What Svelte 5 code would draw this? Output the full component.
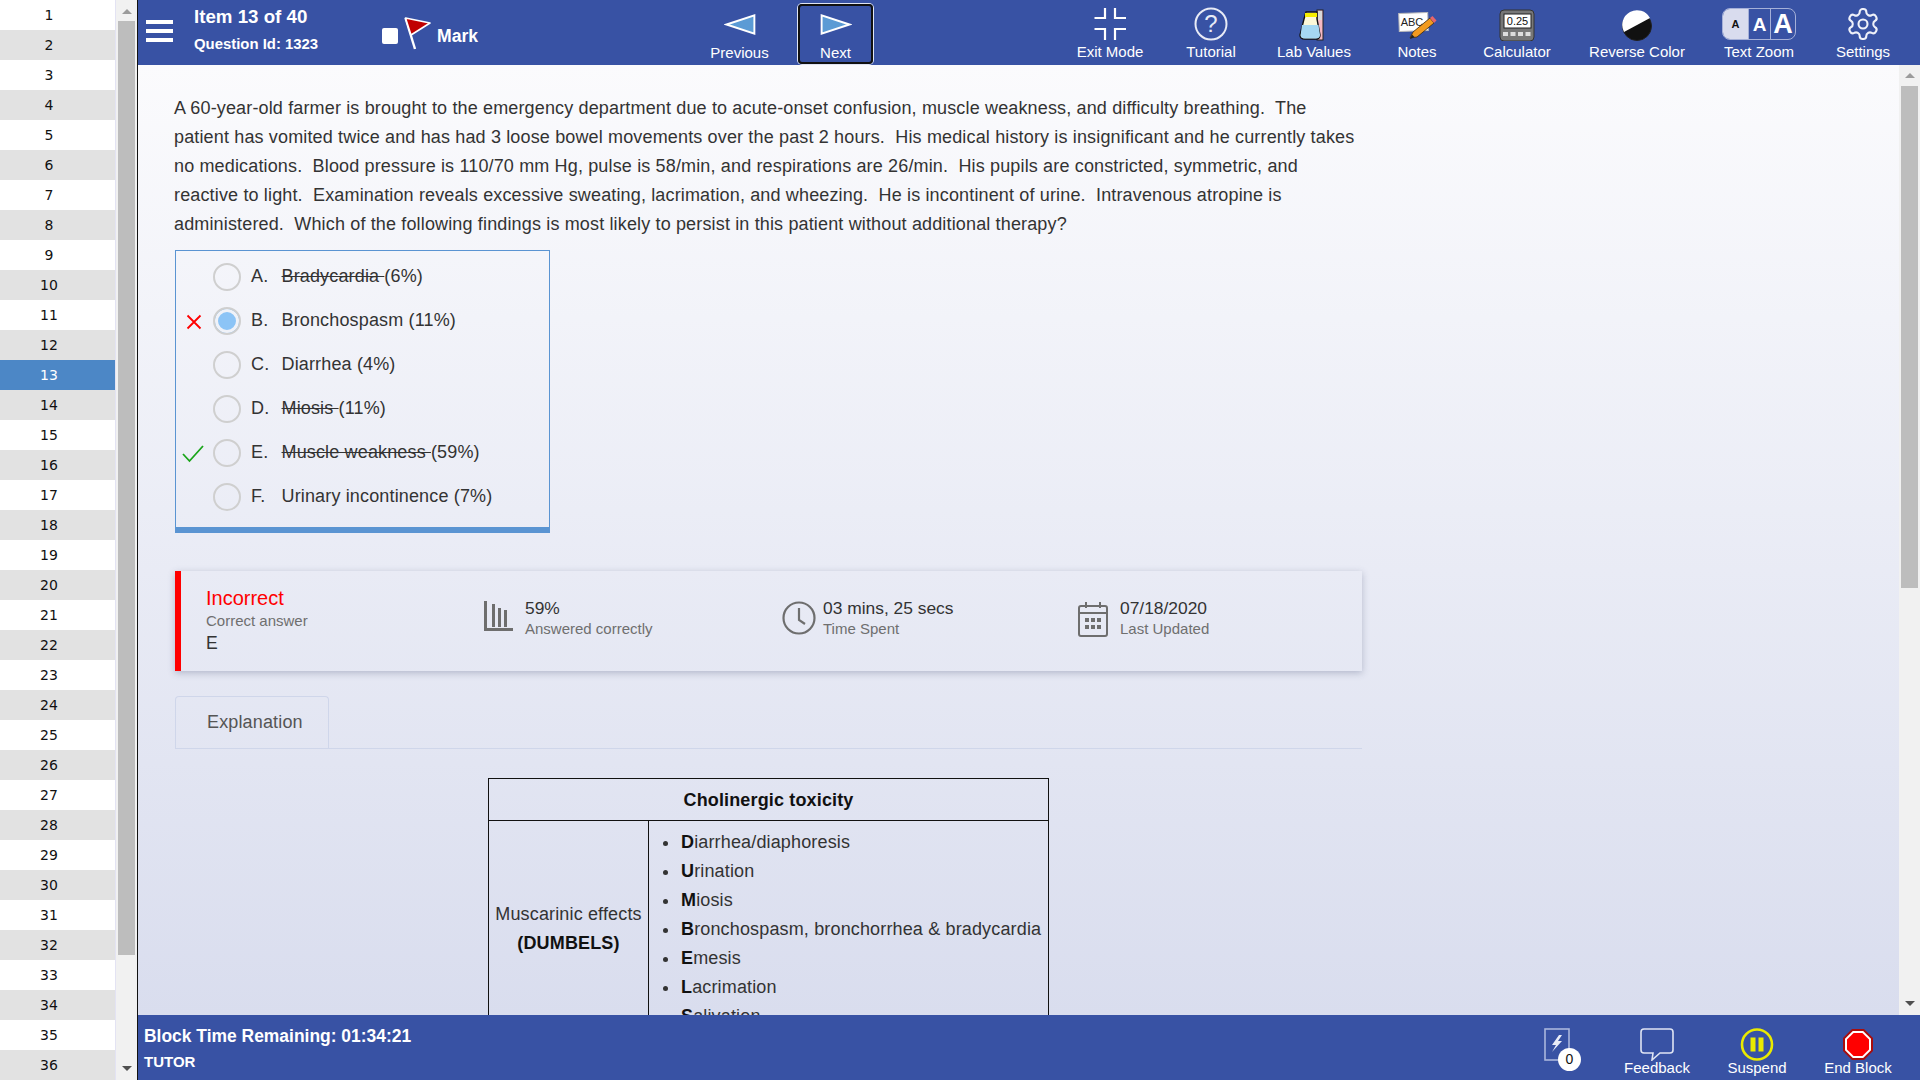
<script lang="ts">
  const ITEMS = Array.from({ length: 36 }, (_, i) => i + 1);
  const CURRENT = 13;

  const OPTIONS = [
    { key: 'A', label: 'Bradycardia', pct: 6, struck: true },
    { key: 'B', label: 'Bronchospasm', pct: 11, selected: true, mark: 'wrong' },
    { key: 'C', label: 'Diarrhea', pct: 4 },
    { key: 'D', label: 'Miosis', pct: 11, struck: true },
    { key: 'E', label: 'Muscle weakness', pct: 59, struck: true, mark: 'right' },
    { key: 'F', label: 'Urinary incontinence', pct: 7 }
  ];

  const DUMBELS = [
    ['D', 'iarrhea/diaphoresis'],
    ['U', 'rination'],
    ['M', 'iosis'],
    ['B', 'ronchospasm, bronchorrhea & bradycardia'],
    ['E', 'mesis'],
    ['L', 'acrimation'],
    ['S', 'alivation']
  ];
</script>

<div class="app">
  <aside class="sidebar">
    <ul class="items">
      {#each ITEMS as n}
        <li class:current={n === CURRENT}><span>{n}</span></li>
      {/each}
    </ul>
    <div class="scrollbar left">
      <span class="arrow up"></span>
      <span class="thumb"></span>
      <span class="arrow down"></span>
    </div>
  </aside>

  <main class="main">
    <header class="topbar">
      <div class="topleft">
        <div class="burger"><i></i><i></i><i></i></div>
        <div class="title">
          <div class="item-no">Item 13 of 40</div>
          <div class="question-id">Question Id: 1323</div>
        </div>
        <div class="mark">
          <span class="checkbox"></span>
          <svg width="27" height="33" viewBox="0 0 27 33">
            <path d="M1.5 1 L11 32" stroke="#fff" stroke-width="2.4" fill="none" />
            <path d="M1.5 1 L26 6 L7 18 Z" fill="#c00000" stroke="#fff" stroke-width="1.6" stroke-linejoin="round" />
          </svg>
          <span class="mark-label">Mark</span>
        </div>
      </div>

      <nav class="nav">
        <div class="nav-btn">
          <svg width="32" height="24" viewBox="0 0 32 24"><polygon points="2,12 31,2.5 31,21.5" fill="#5b9bd5" stroke="#fff" stroke-width="2" /></svg>
          <span>Previous</span>
        </div>
        <div class="nav-btn focused">
          <svg width="32" height="24" viewBox="0 0 32 24"><polygon points="30,12 1,2.5 1,21.5" fill="#5b9bd5" stroke="#fff" stroke-width="2" /></svg>
          <span>Next</span>
        </div>
      </nav>

      <div class="tools">
        <div class="tool">
          <svg width="34" height="34" viewBox="0 0 34 34" fill="none" stroke="#fff" stroke-width="2.2">
            <path d="M1.5 11 H12 V1 M22 1 V11 H33 M1.5 22 H12 V33 M22 33 V22 H33" />
          </svg>
          <span>Exit Mode</span>
        </div>
        <div class="tool">
          <svg width="34" height="34" viewBox="0 0 34 34" fill="none">
            <circle cx="17" cy="17" r="15.5" stroke="#e8ebf6" stroke-width="2" />
            <text x="17" y="25" text-anchor="middle" class="q-glyph">?</text>
          </svg>
          <span>Tutorial</span>
        </div>
        <div class="tool">
          <svg width="34" height="34" viewBox="0 0 34 34">
            <rect x="20" y="3" width="6" height="30" fill="#f5b8c4" stroke="#222" stroke-width="1" />
            <rect x="21" y="4" width="4" height="9" fill="#d9d9d9" />
            <path d="M9 5 H20 V12 L23 28 Q23 32 19 32 H8 Q3 32 3 28 L7 12 Z" fill="#fdf8d8" stroke="#111" stroke-width="1.4" />
            <rect x="8" y="6" width="12" height="4" fill="#f7ee00" />
            <path d="M5 18 H21.5 L23 28 Q23 31.4 19 31.4 H8 Q3.6 31.4 3.6 28 Z" fill="#a6d8f2" />
          </svg>
          <span>Lab Values</span>
        </div>
        <div class="tool">
          <svg width="40" height="34" viewBox="0 0 40 34">
            <rect x="2" y="6" width="29" height="18" fill="#fff" stroke="#bbb" stroke-width="1" transform="rotate(-2 16 15)" />
            <text x="15" y="19" text-anchor="middle" class="abc">ABC</text>
            <path d="M13 31 L16 25 L33 11 L37 16 L20 30 Z" fill="#f29a1f" stroke="#3a2a10" stroke-width=".8" />
            <path d="M33 11 L35.5 9 L39.5 13.5 L37 16 Z" fill="#e8656b" />
            <path d="M13 32 L15 27.5 L17.5 30 Z" fill="#222" />
          </svg>
          <span>Notes</span>
        </div>
        <div class="tool">
          <svg width="36" height="34" viewBox="0 0 36 34">
            <rect x="1" y="3" width="34" height="31" rx="4" fill="#777" stroke="#333" stroke-width="1" />
            <rect x="5" y="7" width="27" height="14" fill="#fff" stroke="#222" stroke-width="1" />
            <text x="18.5" y="18" text-anchor="middle" class="calc">0.25</text>
            <rect x="4" y="25" width="5" height="4" fill="#ddd" />
            <rect x="11.5" y="25" width="5" height="4" fill="#ddd" />
            <rect x="19" y="25" width="5" height="4" fill="#ddd" />
            <rect x="26.5" y="25" width="5" height="4" fill="#ddd" />
          </svg>
          <span>Calculator</span>
        </div>
        <div class="tool">
          <svg width="32" height="34" viewBox="0 0 32 34">
            <circle cx="16" cy="19" r="14.5" fill="#111" stroke="#222" stroke-width="1" />
            <path d="M3 25 A14 14 0 0 1 29 11 Z" fill="#fff" />
          </svg>
          <span>Reverse Color</span>
        </div>
        <div class="tool">
          <div class="zoom-box">
            <span class="z small">A</span>
            <span class="z mid">A</span>
            <span class="z big">A</span>
          </div>
          <span>Text Zoom</span>
        </div>
        <div class="tool">
          <svg width="36" height="36" viewBox="0 0 24 24" fill="none" stroke="#eef0f9" stroke-width="1.4" stroke-linejoin="round" class="gear">
            <path d="M12.22 2h-.44a2 2 0 0 0-2 2v.18a2 2 0 0 1-1 1.73l-.43.25a2 2 0 0 1-2 0l-.15-.08a2 2 0 0 0-2.73.73l-.22.38a2 2 0 0 0 .73 2.73l.15.1a2 2 0 0 1 1 1.72v.51a2 2 0 0 1-1 1.74l-.15.09a2 2 0 0 0-.73 2.73l.22.38a2 2 0 0 0 2.73.73l.15-.08a2 2 0 0 1 2 0l.43.25a2 2 0 0 1 1 1.73V20a2 2 0 0 0 2 2h.44a2 2 0 0 0 2-2v-.18a2 2 0 0 1 1-1.73l.43-.25a2 2 0 0 1 2 0l.15.08a2 2 0 0 0 2.73-.73l.22-.39a2 2 0 0 0-.73-2.73l-.15-.08a2 2 0 0 1-1-1.74v-.5a2 2 0 0 1 1-1.74l.15-.09a2 2 0 0 0 .73-2.73l-.22-.38a2 2 0 0 0-2.73-.73l-.15.08a2 2 0 0 1-2 0l-.43-.25a2 2 0 0 1-1-1.73V4a2 2 0 0 0-2-2z" />
            <circle cx="12" cy="12" r="3" />
          </svg>
          <span>Settings</span>
        </div>
      </div>
    </header>

    <div class="body">
      <div class="content">
        <p class="stem">
          A 60-year-old farmer is brought to the emergency department due to acute-onset confusion, muscle weakness, and difficulty breathing.&nbsp; The patient has vomited twice and has had 3 loose bowel movements over the past 2 hours.&nbsp; His medical history is insignificant and he currently takes no medications.&nbsp; Blood pressure is 110/70 mm Hg, pulse is 58/min, and respirations are 26/min.&nbsp; His pupils are constricted, symmetric, and reactive to light.&nbsp; Examination reveals excessive sweating, lacrimation, and wheezing.&nbsp; He is incontinent of urine.&nbsp; Intravenous atropine is administered.&nbsp; Which of the following findings is most likely to persist in this patient without additional therapy?
        </p>

        <div class="answers">
          {#each OPTIONS as opt}
            <div class="answer">
              <span class="verdict">
                {#if opt.mark === 'wrong'}
                  <svg class="cross" width="16" height="16" viewBox="0 0 16 16"><path d="M1.5 1.5 L14.5 14.5 M14.5 1.5 L1.5 14.5" stroke="#f00" stroke-width="1.8" fill="none" /></svg>
                {:else if opt.mark === 'right'}
                  <svg class="tick" width="22" height="18" viewBox="0 0 22 18"><path d="M1 9 L7.5 16 L21 1" stroke="#1aa51a" stroke-width="1.8" fill="none" /></svg>
                {/if}
              </span>
              <span class="radio" class:selected={opt.selected}></span>
              <span class="letter">{opt.key}.</span>
              <span class="answer-text"><span class:struck={opt.struck}>{opt.label}&nbsp;</span>({opt.pct}%)</span>
            </div>
          {/each}
        </div>

        <section class="stats">
          <div class="result">
            <div class="incorrect">Incorrect</div>
            <div class="sub">Correct answer</div>
            <div class="correct-key">E</div>
          </div>
          <div class="stat">
            <svg class="bars" width="29" height="30" viewBox="0 0 29 30" fill="#6e6e6e">
              <rect x="0" y="0" width="3" height="30" />
              <rect x="0" y="27" width="29" height="3" />
              <rect x="8" y="3" width="3" height="23" />
              <rect x="14" y="7" width="3" height="19" />
              <rect x="20" y="9" width="3" height="17" />
            </svg>
            <div>
              <div class="value">59%</div>
              <div class="sub">Answered correctly</div>
            </div>
          </div>
          <div class="stat">
            <svg class="clock" width="34" height="34" viewBox="0 0 34 34" fill="none" stroke="#6e6e6e" stroke-width="2.2">
              <circle cx="17" cy="17" r="15.5" />
              <path d="M17 7 V19 L23 23" />
            </svg>
            <div>
              <div class="value">03 mins, 25 secs</div>
              <div class="sub">Time Spent</div>
            </div>
          </div>
          <div class="stat">
            <svg class="calendar" width="30" height="36" viewBox="0 0 30 36">
              <rect x="1" y="5" width="28" height="30" rx="2" fill="none" stroke="#6e6e6e" stroke-width="2" />
              <path d="M1 12 H29" stroke="#6e6e6e" stroke-width="2" />
              <path d="M8 1 V7 M22 1 V7" stroke="#6e6e6e" stroke-width="2" />
              <g fill="#6e6e6e">
                <rect x="7" y="17" width="4" height="4" /><rect x="13" y="17" width="4" height="4" /><rect x="19" y="17" width="4" height="4" />
                <rect x="7" y="24" width="4" height="4" /><rect x="13" y="24" width="4" height="4" /><rect x="19" y="24" width="4" height="4" />
              </g>
            </svg>
            <div>
              <div class="value">07/18/2020</div>
              <div class="sub">Last Updated</div>
            </div>
          </div>
        </section>

        <div class="tabs"><div class="tab">Explanation</div></div>

        <table class="explain">
          <thead>
            <tr><th colspan="2">Cholinergic toxicity</th></tr>
          </thead>
          <tbody>
            <tr>
              <td class="effect">Muscarinic effects<br /><strong>(DUMBELS)</strong></td>
              <td class="effect-list">
                <ul>
                  {#each DUMBELS as [first, rest]}
                    <li><strong>{first}</strong>{rest}</li>
                  {/each}
                </ul>
              </td>
            </tr>
          </tbody>
        </table>
      </div>
      <div class="scrollbar right">
        <span class="arrow up"></span>
        <span class="thumb"></span>
        <span class="arrow down"></span>
      </div>
    </div>

    <footer class="bottombar">
      <div class="timer">
        <div class="time-left">Block Time Remaining: 01:34:21</div>
        <div class="mode">TUTOR</div>
      </div>
      <div class="foot-tools">
        <div class="foot-tool flash">
          <svg width="26" height="33" viewBox="0 0 26 33">
            <rect x="1" y="1" width="24" height="31" fill="none" stroke="#a9b6dc" stroke-width="1.6" />
            <path d="M15 7 L8 17 H12 L8 24 L18 13 H14 L18 7 Z" fill="#e9ecf7" />
          </svg>
          <span class="badge">0</span>
        </div>
        <div class="foot-tool">
          <svg width="34" height="33" viewBox="0 0 34 33">
            <path d="M4 1 H30 Q33 1 33 4 V22 Q33 25 30 25 H20 L12 32 L13 25 H4 Q1 25 1 22 V4 Q1 1 4 1 Z" fill="none" stroke="#dfe4f3" stroke-width="1.6" />
          </svg>
          <span>Feedback</span>
        </div>
        <div class="foot-tool">
          <svg width="34" height="33" viewBox="0 0 34 33">
            <circle cx="17" cy="16.5" r="15" fill="none" stroke="#eaea00" stroke-width="2.6" />
            <rect x="10.5" y="9.5" width="5" height="14" fill="#eaea00" />
            <rect x="18.5" y="9.5" width="5" height="14" fill="#eaea00" />
          </svg>
          <span>Suspend</span>
        </div>
        <div class="foot-tool">
          <svg width="32" height="33" viewBox="0 0 32 33">
            <polygon points="10,1 22,1 31,10 31,23 22,32 10,32 1,23 1,10" fill="#a80c0c" />
            <polygon points="10.8,3 21.2,3 29,10.8 29,22.2 21.2,30 10.8,30 3,22.2 3,10.8" fill="#fff" />
            <polygon points="11.6,5 20.4,5 27,11.6 27,21.4 20.4,28 11.6,28 5,21.4 5,11.6" fill="#f00" />
          </svg>
          <span>End Block</span>
        </div>
      </div>
    </footer>
  </main>
</div>

<style>
  :global(body) {
    margin: 0;
    overflow: hidden;
    font-family: "Liberation Sans", Arial, sans-serif;
  }

  .app {
    display: flex;
    width: 1920px;
    height: 1080px;
    overflow: hidden;
    color: #333;
  }

  /* Left item list */
  .sidebar {
    display: flex;
    flex: 0 0 138px;
    border-right: 1px solid #111;
    box-sizing: border-box;
    background: #fff;
  }

  .items {
    flex: 0 0 115px;
    margin: 0;
    padding: 0;
    list-style: none;
    font-family: "DejaVu Sans", sans-serif;
    font-size: 14px;
    color: #111;
  }

  .items li {
    height: 30px;
    line-height: 31px;
    padding-right: 17px;
    text-align: center;
  }

  .items li:nth-child(even) {
    background: #e2e2e2;
  }

  .items li.current {
    background: #4c87c6;
    color: #fff;
  }

  .scrollbar {
    display: flex;
    flex-direction: column;
    align-items: center;
    background: #f1f1f1;
  }

  .scrollbar.left {
    flex: 1;
    border-left: 1px solid #e3e3f3;
  }

  .scrollbar.right {
    flex: 0 0 21px;
  }

  .thumb {
    width: 17px;
    background: #bdbdbd;
  }

  .scrollbar.left .thumb {
    height: 934px;
  }

  .scrollbar.right .thumb {
    height: 502px;
  }

  .arrow {
    width: 0;
    height: 0;
    border-left: 5px solid transparent;
    border-right: 5px solid transparent;
  }

  .arrow.up {
    border-bottom: 5px solid #9b9b9b;
    margin: 9px 0 7px;
  }

  .arrow.down {
    margin-top: auto;
    margin-bottom: 9px;
    border-top: 5px solid #505050;
  }

  .scrollbar.right .arrow.up {
    margin: 8px 0 8px;
  }

  /* Main column */
  .main {
    display: flex;
    flex: 1;
    flex-direction: column;
    min-width: 0;
  }

  .topbar {
    display: flex;
    flex: 0 0 65px;
    background: #3852a4;
    color: #fff;
  }

  .topleft {
    display: flex;
    flex: 0 0 563px;
    padding-left: 8px;
    box-sizing: border-box;
  }

  .burger {
    display: flex;
    flex-direction: column;
    justify-content: space-between;
    width: 27px;
    height: 22px;
    margin-top: 20px;
  }

  .burger i {
    height: 4px;
    background: #fff;
  }

  .title {
    flex: 0 0 188px;
    margin-left: 21px;
    font-weight: bold;
  }

  .item-no {
    font-size: 18.72px;
    line-height: 22px;
    margin-top: 6px;
  }

  .question-id {
    font-size: 14.9px;
    line-height: 18px;
    margin-top: 7px;
  }

  .mark {
    display: flex;
    align-items: center;
    height: 65px;
  }

  .checkbox {
    width: 16px;
    height: 16px;
    margin-top: 6px;
    background: #fff;
    border-radius: 2px;
  }

  .mark svg {
    margin: 2px 0 0 6px;
  }

  .mark-label {
    margin: 8px 0 0 6px;
    font-size: 17.6px;
    font-weight: bold;
  }

  .nav {
    display: flex;
    gap: 19px;
  }

  .nav-btn {
    display: flex;
    flex-direction: column;
    align-items: center;
    box-sizing: border-box;
    width: 77px;
    height: 60px;
    margin-top: 4px;
    padding-top: 7px;
    font-size: 15px;
    line-height: 18px;
    border: 2px solid transparent;
    border-radius: 4px;
  }

  .nav-btn span {
    margin-top: 8px;
  }

  .nav-btn.focused {
    width: 75px;
    margin-left: 1px;
    margin-right: 1px;
    border-color: #111;
    box-shadow: 0 0 0 1px #dfe4f3;
  }

  .tools {
    display: grid;
    grid-template-columns: 100px 102px 104px 102px 98px 142px 102px 106px;
    margin-left: auto;
    padding-right: 4px;
  }

  .tool {
    display: flex;
    flex-direction: column;
    align-items: center;
    padding-top: 7px;
    font-size: 15px;
    line-height: 18px;
  }

  .tool > svg {
    flex: 0 0 34px;
  }

  .tool > span {
    margin-top: 2px;
  }

  .tool > .gear {
    flex: 0 0 36px;
    margin: -1px 0;
  }

  .q-glyph {
    font: 24px "Liberation Sans", sans-serif;
    fill: #e8ebf6;
  }

  .abc {
    font: 11px "Liberation Sans", sans-serif;
    fill: #222;
  }

  .calc {
    font: 11px "Liberation Sans", sans-serif;
    fill: #111;
  }

  .zoom-box {
    display: flex;
    flex: 0 0 32px;
    box-sizing: border-box;
    width: 74px;
    margin: 1px 0;
    border: 1px solid #a5b0d8;
    border-radius: 8px;
    overflow: hidden;
    font-weight: bold;
  }

  .z {
    display: flex;
    flex: 1;
    align-items: center;
    justify-content: center;
    line-height: 1;
  }

  .z.small {
    flex: 0 0 25px;
    background: #d9dcee;
    color: #111;
    font-size: 11px;
  }

  .z.mid {
    flex: 0 0 23px;
    font-size: 19px;
    border-right: 1px solid #a5b0d8;
    border-left: 1px solid #a5b0d8;
    box-sizing: border-box;
  }

  .z.big {
    font-size: 27px;
  }

  /* Question area */
  .body {
    display: flex;
    flex: 1;
    min-height: 0;
    background: linear-gradient(#fbfbfd, #d9ddee);
  }

  .content {
    flex: 1;
    min-width: 0;
    padding: 0 0 0 36px;
    overflow: hidden;
  }

  .stem {
    width: 1188px;
    margin: 29px 0 0;
    font-size: 18px;
    letter-spacing: 0.15px;
    line-height: 29px;
    color: #333;
  }

  .answers {
    box-sizing: border-box;
    width: 375px;
    height: 283px;
    margin: 11px 0 0 1px;
    padding-top: 3px;
    border: 1px solid #5a94d2;
    border-bottom-width: 6px;
  }

  .answer {
    display: flex;
    align-items: center;
    height: 44px;
    font-size: 18px;
    letter-spacing: 0.15px;
  }

  .verdict {
    display: flex;
    flex: 0 0 37px;
    justify-content: center;
    margin-top: 3px;
  }

  .cross {
    margin-left: -1px;
  }

  .tick {
    margin-left: -4px;
  }

  .radio {
    box-sizing: border-box;
    flex: 0 0 28px;
    height: 28px;
    margin-top: 2px;
    border: 2px solid #cfcfcf;
    border-radius: 50%;
  }

  .radio.selected {
    background: #8cc4f6;
    box-shadow: inset 0 0 0 3px #f0f2f8;
  }

  .letter {
    flex: 0 0 30.5px;
    margin-left: 10px;
  }

  .struck {
    text-decoration: line-through;
  }

  .stats {
    display: grid;
    grid-template-columns: 278px 298px 296px 1fr;
    box-sizing: border-box;
    width: 1187px;
    height: 100px;
    margin: 38px 0 0 1px;
    padding-left: 25px;
    border-left: 6px solid #f00;
    box-shadow: 0 2px 7px rgba(60, 70, 110, 0.3);
  }

  .result {
    padding-top: 16px;
  }

  .incorrect {
    font-size: 20px;
    line-height: 23px;
    color: #f00;
  }

  .sub {
    font-size: 15px;
    line-height: 19px;
    color: #6f6f6f;
  }

  .result .sub {
    margin-top: 1px;
  }

  .correct-key {
    margin-top: 2px;
    font-size: 17.6px;
    line-height: 22px;
    color: #333;
  }

  .stat {
    display: flex;
    align-items: flex-start;
    padding-top: 26px;
  }

  .value {
    font-size: 17.4px;
    line-height: 22px;
  }

  .bars {
    margin: 4px 12px 0 0;
  }

  .clock {
    margin: 4px 7px 0 0;
  }

  .calendar {
    margin: 4px 12px 0 0;
  }

  .tabs {
    width: 1187px;
    height: 52px;
    margin: 25px 0 0 1px;
    box-sizing: content-box;
    border-bottom: 1px solid #cfd6ea;
  }

  .tab {
    box-sizing: border-box;
    width: 154px;
    height: 53px;
    padding-left: 31px;
    font-size: 18px;
    letter-spacing: 0.15px;
    line-height: 50px;
    color: #555;
    border: 1px solid #cfd6ea;
    border-bottom: none;
    border-radius: 4px 4px 0 0;
  }

  .explain {
    width: 561px;
    margin: 29px 0 0 314px;
    border-collapse: collapse;
    color: #333;
    font-size: 18px;
    letter-spacing: 0.15px;
    line-height: 29px;
  }

  .explain th,
  .explain td {
    border: 1px solid #111;
    padding: 0;
  }

  .explain th {
    height: 42px;
    padding-top: 2px;
    box-sizing: border-box;
    color: #111;
    font-size: 18px;
  }

  .effect {
    width: 159px;
    text-align: center;
  }

  .explain strong {
    color: #111;
  }

  .effect-list ul {
    margin: 0;
    padding: 7px 0 6px 31px;
  }

  .effect-list li {
    padding-left: 1px;
  }

  /* Footer */
  .bottombar {
    display: flex;
    flex: 0 0 65px;
    justify-content: space-between;
    background: #3852a4;
    color: #fff;
  }

  .timer {
    padding: 10px 0 0 6px;
    font-weight: bold;
  }

  .time-left {
    font-size: 17.45px;
    line-height: 22px;
  }

  .mode {
    font-size: 15px;
    line-height: 18px;
    margin-top: 6px;
  }

  .foot-tools {
    display: grid;
    grid-template-columns: 100px 100px 100px 102px;
    padding-right: 11px;
  }

  .foot-tool {
    position: relative;
    display: flex;
    flex-direction: column;
    align-items: center;
    padding-top: 13px;
    font-size: 15px;
    line-height: 18px;
  }

  .foot-tool span {
    margin-top: -2px;
  }

  .foot-tool .badge {
    position: absolute;
    left: 51px;
    top: 33px;
    width: 23px;
    height: 23px;
    margin: 0;
    border-radius: 50%;
    background: #fff;
    color: #111;
    font-size: 14px;
    line-height: 23px;
    text-align: center;
  }
</style>
